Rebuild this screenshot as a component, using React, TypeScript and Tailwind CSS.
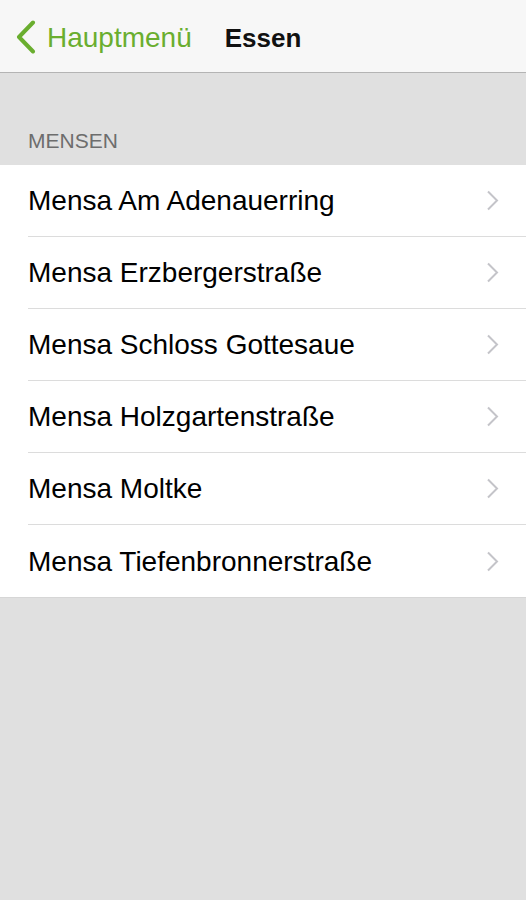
import React from 'react';

// Liste der Mensen
const mensen = [
  'Mensa Am Adenauerring',
  'Mensa Erzbergerstraße',
  'Mensa Schloss Gottesaue',
  'Mensa Holzgartenstraße',
  'Mensa Moltke',
  'Mensa Tiefenbronnerstraße',
];

const font = { fontFamily: '"Liberation Sans", Arial, sans-serif' };

function App() {
  return (
    <div className="min-h-[900px] bg-[#e0e0e0]" style={font}>
      {/* Navigationsleiste */}
      <div className="h-[73px] bg-[#f7f7f7] border-b border-[#b4b4b4] flex items-center pt-[3px]">
        <div className="flex items-center pl-[15px]">
          <svg width="21" height="34" viewBox="0 0 21 34" className="mr-[11px] -mt-[2px]">
            <path d="M18 2.5 L4 17 L18 31.5" fill="none" stroke="#6aae2f" strokeWidth="4" strokeLinecap="round" strokeLinejoin="round" />
          </svg>
          <span className="text-[28px] text-[#6aae2f] leading-none">Hauptmenü</span>
        </div>
        <span className="ml-[33px] text-[26px] font-bold text-[#111] leading-none">Essen</span>
      </div>

      {/* Abschnitt */}
      <div className="pt-[57px] pb-[13px] pl-[28px] text-[21px] text-[#6d6d6d] leading-[22px]">MENSEN</div>

      <div className="bg-white border-b border-[#d6d6d6]">
        {mensen.map((name, i) => (
          <div key={name} className="pl-[28px]">
            <div
              className={`h-[72px] flex items-center justify-between pr-[27px] ${
                i < mensen.length - 1 ? 'border-b border-[#dcdcdc]' : ''
              }`}
            >
              <span className="text-[28px] text-black leading-none pt-[1px]">{name}</span>
              <svg width="13" height="21" viewBox="0 0 13 21">
                <path d="M2 1.5 L11 10.5 L2 19.5" fill="none" stroke="#c4c4c9" strokeWidth="2" />
              </svg>
            </div>
          </div>
        ))}
      </div>
    </div>
  );
}

export default App;
